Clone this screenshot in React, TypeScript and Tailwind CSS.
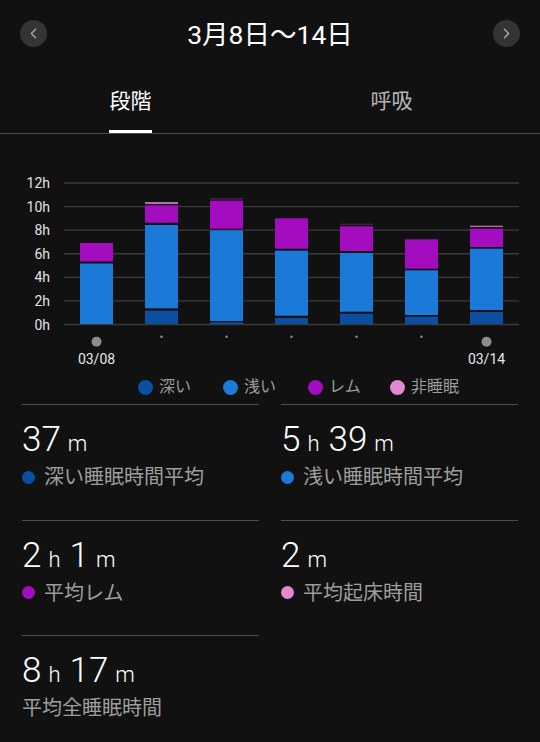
import { ChevronLeft, ChevronRight } from 'lucide-react';

const FONT = "font-['Roboto','Noto_Sans_CJK_JP',sans-serif]";

const DEEP = '#0b4fa3';
const LIGHT = '#1b7ad8';
const REM = '#a40cbf';
const AWAKE = '#b070b0';
const DIM = '#5a2460';

// page-y coordinates measured from the chart; offset applied below
const OFFSET = 134;
type Seg = [string, number, number];
const BARS: { x: number; segs: Seg[] }[] = [
  { x: 80, segs: [[REM, 243, 261.5], [LIGHT, 263.5, 324]] },
  { x: 145, segs: [[AWAKE, 202, 204], [REM, 205.3, 222.7], [LIGHT, 225, 308.3], [DEEP, 310.7, 324]] },
  { x: 210, segs: [[DIM, 198.3, 199.5], [REM, 200.7, 228.7], [LIGHT, 230.3, 321], [DEEP, 322.3, 324]] },
  { x: 275, segs: [[REM, 218.3, 248.7], [LIGHT, 250.7, 315.7], [DEEP, 318, 324]] },
  { x: 340, segs: [[DIM, 223.7, 224.7], [REM, 226.3, 251], [LIGHT, 253, 311.7], [DEEP, 313.7, 324]] },
  { x: 405, segs: [[REM, 239.3, 268.7], [LIGHT, 270.3, 315], [DEEP, 316.7, 324]] },
  { x: 470, segs: [[AWAKE, 225.7, 227], [REM, 228.7, 247], [LIGHT, 248.7, 310], [DEEP, 312, 324]] },
];

const TICKS = ['12h', '10h', '8h', '6h', '4h', '2h', '0h'];

function SleepChart() {
  const base = 324.5 - OFFSET;
  const step = 23.58;
  return (
    <svg width={540} height={240} className="block">
      {TICKS.map((t, i) => {
        const y = base - (6 - i) * step;
        return (
          <g key={t}>
            <line x1={64} x2={519} y1={y} y2={y} stroke="#3b3b3b" strokeWidth={1.3} />
            <text x={50} y={y} textAnchor="end" dominantBaseline="central" fontSize={14} fill="#e2e2e2" fontFamily="Roboto, sans-serif">
              {t}
            </text>
          </g>
        );
      })}
      {BARS.map((b) =>
        b.segs.map(([c, top, bottom], j) => (
          <rect key={`${b.x}-${j}`} x={b.x} y={top - OFFSET} width={33} height={bottom - top} fill={c} />
        )),
      )}
      {BARS.map((b, i) => {
        const cx = b.x + 16.5;
        if (i === 0 || i === BARS.length - 1) {
          return (
            <g key={`d${i}`}>
              <circle cx={cx} cy={341.7 - OFFSET} r={5} fill="#8d8d8d" />
              <text x={cx} y={359 - OFFSET} textAnchor="middle" dominantBaseline="central" fontSize={14} fill="#e6e6e6" fontFamily="Roboto, sans-serif">
                {i === 0 ? '03/08' : '03/14'}
              </text>
            </g>
          );
        }
        return <circle key={`d${i}`} cx={cx} cy={336.7 - OFFSET} r={1.3} fill="#8a8a8a" />;
      })}
    </svg>
  );
}

const LEGEND = [
  { label: '深い', color: DEEP, w: 'w-[85px]' },
  { label: '浅い', color: LIGHT, w: 'w-[85px]' },
  { label: 'レム', color: REM, w: 'w-[82px]' },
  { label: '非睡眠', color: '#e08ad0', w: '' },
];

type Part = [string, string];
interface Stat {
  parts: Part[];
  label: string;
  dot?: string;
}

const STATS: Stat[] = [
  { parts: [['37', 'm']], label: '深い睡眠時間平均', dot: DEEP },
  { parts: [['5', 'h'], ['39', 'm']], label: '浅い睡眠時間平均', dot: LIGHT },
  { parts: [['2', 'h'], ['1', 'm']], label: '平均レム', dot: REM },
  { parts: [['2', 'm']], label: '平均起床時間', dot: '#e08ad0' },
  { parts: [['8', 'h'], ['17', 'm']], label: '平均全睡眠時間' },
];

function StatCell({ stat }: { stat: Stat }) {
  return (
    <div className="h-[115.5px] border-t border-[#4d4d4d] pt-[15px]">
      <div className="flex items-baseline text-white leading-[40px]">
        {stat.parts.map(([n, u], i) => (
          <span key={i} className="flex items-baseline">
            <span className="text-[35px] font-light">{n}</span>
            <span className="ml-[7px] mr-[9px] text-[22px] font-light">{u}</span>
          </span>
        ))}
      </div>
      <div className="-mt-[1px] flex items-center gap-[9px] text-[20px] leading-[28px] text-[#9e9e9e]">
        {stat.dot && <span className="h-[13px] w-[13px] rounded-full" style={{ backgroundColor: stat.dot }} />}
        <span>{stat.label}</span>
      </div>
    </div>
  );
}

export default function App() {
  return (
    <div className={`${FONT} h-[742px] w-[540px] overflow-hidden bg-[#111111]`}>
      <div className="flex h-[66px] items-center justify-between px-[20px] pt-[1px]">
        <button className="flex h-[27px] w-[27px] items-center justify-center rounded-full bg-[#343434] text-[#b0b0b0]">
          <ChevronLeft size={17} strokeWidth={1.75} />
        </button>
        <h1 className="mt-[3px] text-[26.5px] text-white">3月8日〜14日</h1>
        <button className="flex h-[27px] w-[27px] items-center justify-center rounded-full bg-[#343434] text-[#b0b0b0]">
          <ChevronRight size={17} strokeWidth={1.75} />
        </button>
      </div>

      <div className="flex border-b border-[#4a4a4a] pr-[18px]">
        <div className="flex flex-1 flex-col items-center pt-[20px]">
          <span className="text-[21px] leading-[30px] text-white">段階</span>
          <span className="mt-[14px] h-[3px] w-[43px] bg-white" />
        </div>
        <div className="flex flex-1 flex-col items-center pt-[20px]">
          <span className="text-[21px] leading-[30px] text-[#b3b3b3]">呼吸</span>
          <span className="mt-[14px] h-[3px] w-[43px]" />
        </div>
      </div>

      <SleepChart />

      <div className="-mt-[1px] flex h-[28px] items-center pl-[138px] text-[16px] text-[#9c9c9c]">
        {LEGEND.map((l) => (
          <div key={l.label} className={`flex items-center gap-[6px] ${l.w}`}>
            <span className="h-[15px] w-[15px] rounded-full" style={{ backgroundColor: l.color }} />
            <span>{l.label}</span>
          </div>
        ))}
      </div>

      <div className="mt-[3px] grid grid-cols-2 gap-x-[22px] px-[22px]">
        {STATS.map((s, i) => (
          <StatCell key={i} stat={s} />
        ))}
      </div>
    </div>
  );
}
